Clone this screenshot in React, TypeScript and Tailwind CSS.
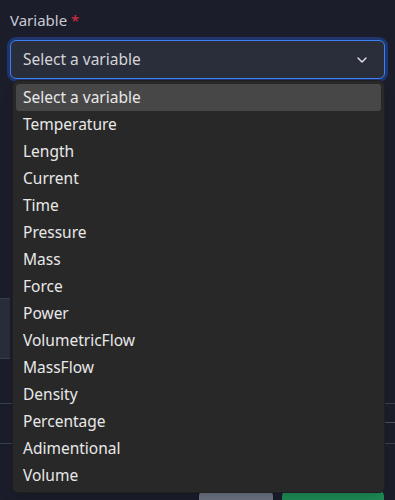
import { ChevronDown } from "lucide-react";

const options = [
  "Select a variable",
  "Temperature",
  "Length",
  "Current",
  "Time",
  "Pressure",
  "Mass",
  "Force",
  "Power",
  "VolumetricFlow",
  "MassFlow",
  "Density",
  "Percentage",
  "Adimentional",
  "Volume",
];

export default function App() {
  return (
    <div
      className="relative h-[500px] w-[395px] overflow-hidden bg-[#1b1d2b] text-[#d4d4d8]"
      style={{ fontFamily: '"Noto Sans", sans-serif' }}
    >
      {/* form field */}
      <div className="px-[10px] pt-[9px]">
        <label className="block text-[15px] leading-[22px] text-[#c9cbd1]">
          Variable <span className="text-[#dc2f3f]">*</span>
        </label>
        <div className="mt-[9px] flex h-[39px] items-center justify-between rounded-md border border-[#3b82f6] bg-[#2a2e3a] pl-[12px] pr-[14px] shadow-[0_0_0_3px_rgba(37,99,235,0.35)]">
          <span className="text-[15.5px] text-[#d4d4d8]">Select a variable</span>
          <ChevronDown size={16} strokeWidth={2} className="text-[#e5e7eb]" />
        </div>
      </div>

      {/* content behind the menu */}
      <div className="mt-[219px] h-[61px] w-[10px] border-y border-[#3a3f4d] bg-[#2a2e3a]" />
      <div className="mt-[44px] border-t border-[#3a3f4d]" />
      <div className="mt-[18px] flex justify-end">
        <div className="h-px w-[12px] bg-[#4b5060]" />
      </div>
      <div className="mt-[20px] border-t border-[#3a3f4d]" />
      <div className="mt-[46px] flex justify-end gap-[9px] pr-[11px]">
        <div className="h-[20px] w-[74px] rounded-md bg-[#6b7280]" />
        <div className="h-[20px] w-[102px] rounded-md bg-[#1e8a55]" />
      </div>

      {/* open listbox */}
      <ul className="absolute left-[12px] top-[80px] w-[373px] rounded-md border border-[#1f1f1f] bg-[#282828] p-[3px] shadow-lg">
        {options.map((o, i) => (
          <li
            key={o}
            className={
              "flex h-[27px] items-center rounded-[3px] pl-[7px] text-[15.5px] text-[#e8e8e8] " +
              (i === 0 ? "bg-[#474747]" : "")
            }
          >
            {o}
          </li>
        ))}
      </ul>
    </div>
  );
}
